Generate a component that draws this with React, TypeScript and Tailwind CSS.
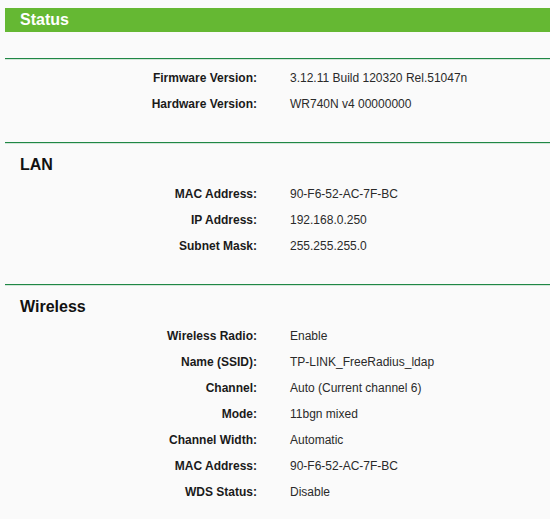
import React from 'react';

type Row = [string, string];

const firmware: Row[] = [
    ['Firmware Version:', '3.12.11 Build 120320 Rel.51047n'],
    ['Hardware Version:', 'WR740N v4 00000000'],
];

const lan: Row[] = [
    ['MAC Address:', '90-F6-52-AC-7F-BC'],
    ['IP Address:', '192.168.0.250'],
    ['Subnet Mask:', '255.255.255.0'],
];

const wireless: Row[] = [
    ['Wireless Radio:', 'Enable'],
    ['Name (SSID):', 'TP-LINK_FreeRadius_ldap'],
    ['Channel:', 'Auto (Current channel 6)'],
    ['Mode:', '11bgn mixed'],
    ['Channel Width:', 'Automatic'],
    ['MAC Address:', '90-F6-52-AC-7F-BC'],
    ['WDS Status:', 'Disable'],
];

// double rule like the old router pages: dark green over a pale line
const Divider: React.FC = () => (
    <div className="border-t border-[#1f8745]">
        <div className="border-t border-[#d3e6d9]" />
    </div>
);

const Section: React.FC<{ title?: string; rows: Row[] }> = ({ title, rows }) => (
    <div className="pb-[26px]">
        <Divider />
        {title ? (
            <h2 className="pl-[15px] pt-[11px] pb-[5px] text-[16px] leading-[20px] font-bold text-[#111]">
                {title}
            </h2>
        ) : (
            <div className="h-[4px]" />
        )}
        {rows.map(([label, value], i) => (
            <div key={i} className="flex h-[26px] items-center pt-[2px] text-[12px]">
                <div className="w-[252px] shrink-0 text-right font-bold text-[#1a1a1a]">{label}</div>
                <div className="pl-[33px] text-[#2a2a2a]">{value}</div>
            </div>
        ))}
    </div>
);

export default function App() {
    return (
        <div
            className="min-h-[519px] bg-[#fafafa] pl-[5px] pt-[8px]"
            style={{ fontFamily: '"Liberation Sans", Arial, sans-serif' }}
        >
            <div className="h-[24px] bg-[#65b833] pl-[15px] pt-[1px] text-[16px] leading-[22px] font-bold text-white">
                Status
            </div>
            <div className="h-[26px]" />
            <Section rows={firmware} />
            <Section title="LAN" rows={lan} />
            <Section title="Wireless" rows={wireless} />
        </div>
    );
}
